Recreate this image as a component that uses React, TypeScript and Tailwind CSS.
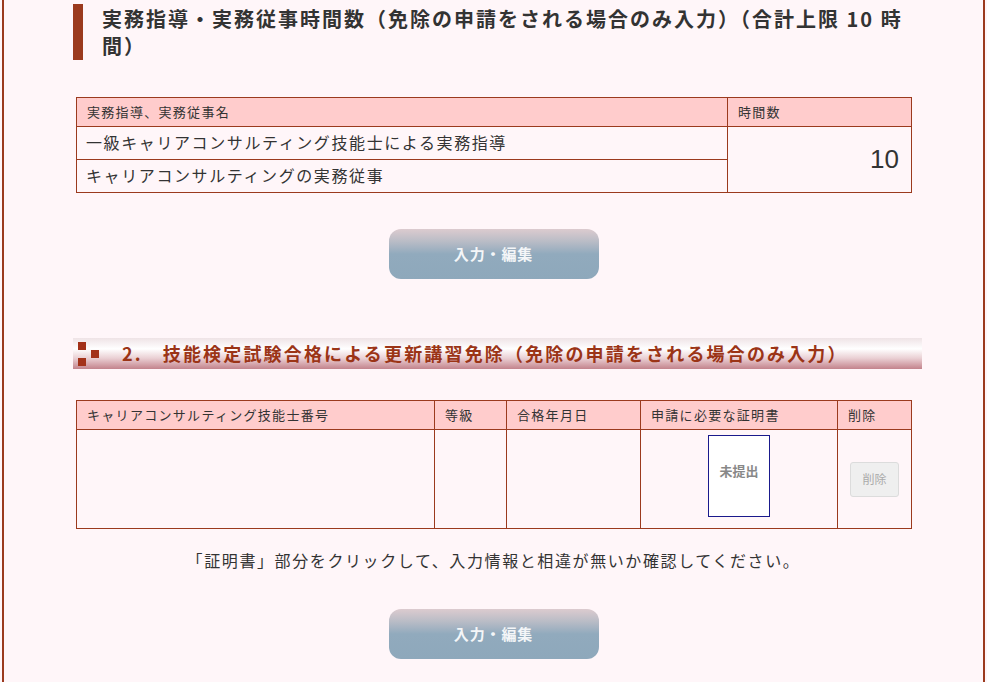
import React from "react";

const jp = { fontFamily: '"Noto Sans CJK JP", "Noto Sans", sans-serif' };

const EditButton: React.FC = () => (
  <div className="flex justify-center">
    <button
      className="w-[210px] h-[50px] rounded-[12px] bg-[linear-gradient(to_bottom,#dccbcf_0%,#b9bcc6_25%,#91aabd_50%,#8ea8bb_100%)] text-[15px] font-bold tracking-[0.06em] text-[#f4f6f8]"
      style={jp}
    >
      入力・編集
    </button>
  </div>
);

const App: React.FC = () => {
  return (
    <div className="min-h-[682px] bg-[#fff6f9]" style={jp}>
      <div className="mx-[2px] border-x-2 border-[#9b3a1e] min-h-[682px] px-[72px] pt-[4px] text-[#333]">
        {/* 実務指導・実務従事 */}
        <div className="-ml-[3px] flex">
          <div className="w-[10px] bg-[#9b3a1e] shrink-0"></div>
          <h2 className="pl-[19px] pr-[8px] py-[1px] text-[20px] leading-[27px] font-bold tracking-[0.1em] text-[#333]">
            実務指導・実務従事時間数（免除の申請をされる場合のみ入力）（合計上限 10 時間）
          </h2>
        </div>

        <table className="mt-[37px] w-[835px] border-collapse table-fixed">
          <colgroup>
            <col className="w-[651px]" />
            <col className="w-[184px]" />
          </colgroup>
          <thead>
            <tr className="h-[29px] bg-[#ffcccc] text-[13px] tracking-[0.1em]">
              <th className="border border-[#9b3a1e] px-[10px] text-left font-normal">実務指導、実務従事名</th>
              <th className="border border-[#9b3a1e] px-[10px] text-left font-normal">時間数</th>
            </tr>
          </thead>
          <tbody className="text-[16px] tracking-[0.1em]">
            <tr className="h-[33px]">
              <td className="border border-[#9b3a1e] px-[9px] pb-[3px]">一級キャリアコンサルティング技能士による実務指導</td>
              <td
                rowSpan={2}
                className="border border-[#9b3a1e] px-[12px] text-right text-[26px] align-middle tracking-normal"
                style={{ fontFamily: '"Liberation Sans", Arial, sans-serif' }}
              >
                10
              </td>
            </tr>
            <tr className="h-[33px]">
              <td className="border border-[#9b3a1e] px-[9px] pb-[3px]">キャリアコンサルティングの実務従事</td>
            </tr>
          </tbody>
        </table>

        <div className="mt-[36px]">
          <EditButton />
        </div>

        {/* 2. 技能検定試験合格 */}
        <div className="mt-[59px] -ml-[3px] w-[849px] h-[31px] flex items-center bg-[linear-gradient(to_bottom,#efe3e6_0%,#ffffff_35%,#ead0d4_65%,#c3838c_100%)]">
          <div className="relative w-[26px] h-[24px] ml-[5px] shrink-0">
            <span className="absolute left-0 top-0 w-[8px] h-[8px] bg-[#a3321a]"></span>
            <span className="absolute left-[13px] top-[8px] w-[8px] h-[8px] bg-[#a3321a]"></span>
            <span className="absolute left-0 top-[16px] w-[8px] h-[8px] bg-[#a3321a]"></span>
          </div>
          <h3 className="ml-[18px] text-[18px] font-bold tracking-[0.12em] text-[#9b3416] whitespace-nowrap">
            <span className="mr-[20px]">2.</span>技能検定試験合格による更新講習免除（免除の申請をされる場合のみ入力）
          </h3>
        </div>

        <table className="mt-[31px] w-[835px] border-collapse table-fixed">
          <colgroup>
            <col className="w-[358px]" />
            <col className="w-[72px]" />
            <col className="w-[134px]" />
            <col className="w-[197px]" />
            <col className="w-[74px]" />
          </colgroup>
          <thead>
            <tr className="h-[29px] bg-[#ffcccc] text-[13px] tracking-[0.1em]">
              <th className="border border-[#9b3a1e] px-[10px] text-left font-normal">キャリアコンサルティング技能士番号</th>
              <th className="border border-[#9b3a1e] px-[10px] text-left font-normal">等級</th>
              <th className="border border-[#9b3a1e] px-[10px] text-left font-normal">合格年月日</th>
              <th className="border border-[#9b3a1e] px-[10px] text-left font-normal">申請に必要な証明書</th>
              <th className="border border-[#9b3a1e] px-[10px] text-left font-normal">削除</th>
            </tr>
          </thead>
          <tbody>
            <tr className="h-[99px]">
              <td className="border border-[#9b3a1e]"></td>
              <td className="border border-[#9b3a1e]"></td>
              <td className="border border-[#9b3a1e]"></td>
              <td className="border border-[#9b3a1e] align-top pt-[5px]">
                <div className="mx-auto w-[62px] h-[82px] border border-[#1a1a8c] bg-white flex items-start justify-center pt-[25px]">
                  <span className="text-[13px] font-bold text-[#888]">未提出</span>
                </div>
              </td>
              <td className="border border-[#9b3a1e] align-middle">
                <div className="flex justify-center">
                  <button className="w-[49px] h-[35px] rounded-[3px] border border-[#dcdcdc] bg-[#efefef] text-[12px] text-[#aaa]">
                    削除
                  </button>
                </div>
              </td>
            </tr>
          </tbody>
        </table>

        <p className="mt-[19px] text-center text-[16px] leading-[24px] tracking-[0.1em] text-[#333]">
          「証明書」部分をクリックして、入力情報と相違が無いか確認してください。
        </p>

        <div className="mt-[37px] pb-[30px]">
          <EditButton />
        </div>
      </div>
    </div>
  );
};

export default App;
